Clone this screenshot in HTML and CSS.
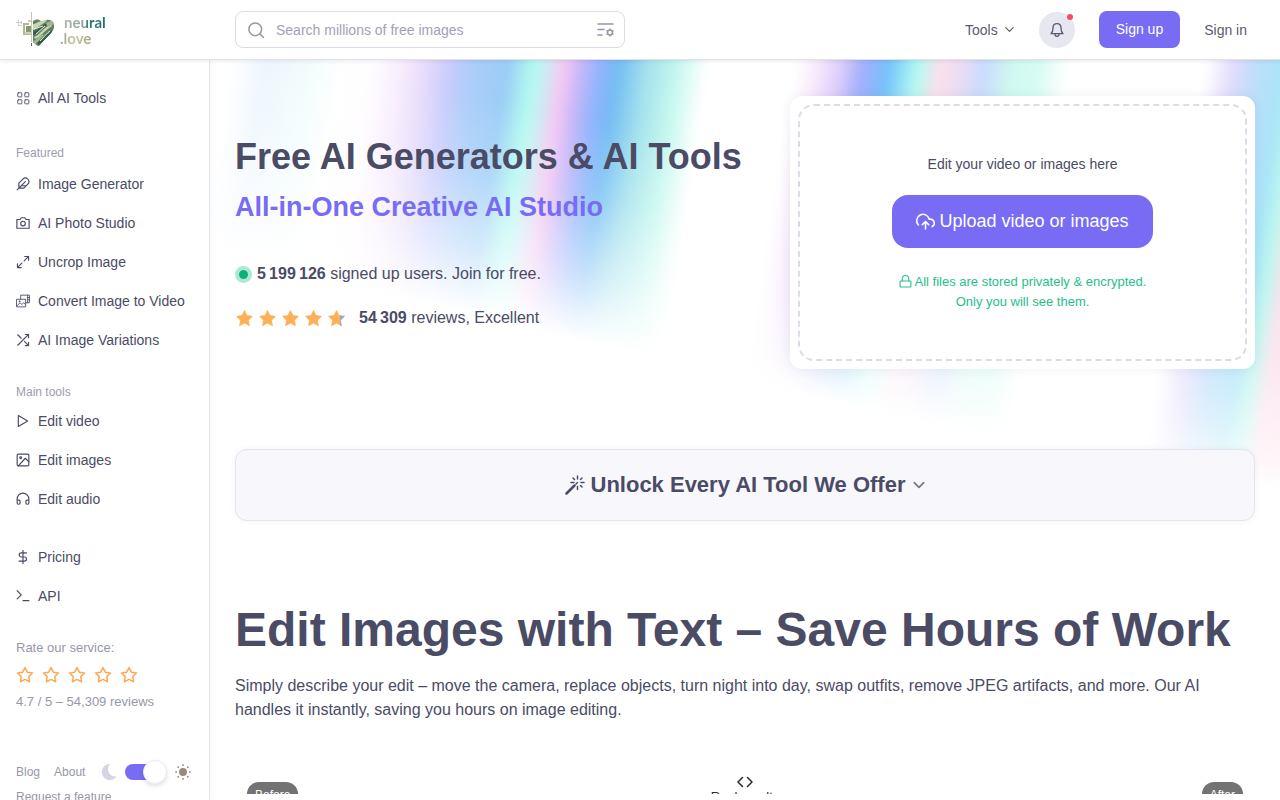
FILE: index.html
```
<!DOCTYPE html>
<html lang="en">
<head>
  <meta charset="UTF-8">
  <meta name="viewport" content="width=device-width, initial-scale=1">
  <title>Free AI Generators &amp; AI Tools | neural.love</title>
  <link rel="stylesheet" href="styles.css">
</head>
<body>
<!-- icons shared between several places -->
<svg class="sprite" aria-hidden="true">
  <symbol id="star" viewBox="0 0 24 24"><path d="M12 2l3.09 6.26L22 9.27l-5 4.87 1.18 6.88L12 17.77l-6.18 3.25L7 14.14 2 9.27l6.91-1.01z"/></symbol>
  <symbol id="chevron" viewBox="0 0 24 24"><path d="M4 8l8 8 8-8"/></symbol>
</svg>

<header class="header">
  <a class="logo" href="#" aria-label="neural.love">
    <svg class="logo-mark" viewBox="0 0 40 36" aria-hidden="true">
      <defs>
        <clipPath id="heart"><path d="M17 9c2-1 4-2 6-1l4 2c3-3 7-3 10 0 2 4 1 8-2 11L23 34c-2 0-4-2-6-4z"/></clipPath>
      </defs>
      <g clip-path="url(#heart)">
        <path fill="#5f8068" d="M16 5h24v30H16z"/>
        <path fill="#cbd5aa" d="M16 13l13-6 2 2-15 10zM18 25c6-2 9-9 17-13l1 2c-7 4-11 11-17 13z"/>
        <path fill="#335c4b" d="M17 20c5-2 8-6 12-8l2 1c-5 3-9 9-14 10zM21 31l15-13v3L23 33z"/>
        <path fill="#a3b78e" d="M17 29c4-1 6-5 8-7l3 1-9 10zM30 11l7-3 1 4-6 3z"/>
        <path stroke="#eef0dc" d="M18 17l9-3M24 29c4-4 7-8 10-10M20 22l9-8" fill="none"/>
      </g>
      <path fill="#b4b894" d="M7 11h6v2H9v8h7v2H7z"/>
      <path fill="#879875" d="M10 14h5v7h-5z"/>
      <path fill="#cdd0b9" d="M9 20h6v2H9zM12 8h3v2h-3z"/>
      <path stroke="#cfcfca" fill="none" d="M0 10.500h6M2.500 8v6M5.500 9v3M2 13.500h4"/>
      <path fill="#c9c7a8" d="M15 0h1v30h-1z"/>
      <path fill="#5b654f" d="M15 31h1v3h-1z"/>
    </svg>
    <span class="logo-text"><span class="logo-neural">neural</span><span class="logo-love">.love</span></span>
  </a>

  <form class="search" role="search">
    <svg class="icon search-icon" viewBox="0 0 24 24" aria-hidden="true"><circle cx="11" cy="11" r="8.500"/><path d="M22 22l-4.800-4.800"/></svg>
    <input class="search-input" type="search" placeholder="Search millions of free images" aria-label="Search millions of free images">
    <button class="search-filter" type="button" aria-label="Search settings">
      <svg class="icon" viewBox="0 0 18 16" aria-hidden="true"><path d="M2 2h15M2 7.500h6M2 13h4"/><circle cx="14" cy="10.500" r="2.500"/><path d="M14 7v.5M14 13.500v.5M11 8.800l.5.300M16.500 11.900l.5.300M11 12.200l.5-.3M16.500 9.100l.5-.3"/></svg>
    </button>
  </form>

  <nav class="header-nav">
    <button class="tools-button" type="button">Tools <svg class="icon" viewBox="0 0 24 24" aria-hidden="true"><use href="#chevron"/></svg></button>
    <button class="bell" type="button" aria-label="Notifications">
      <svg class="icon" viewBox="0 0 24 24" aria-hidden="true"><path d="M12 2.500c-4 0-6 3-6 6.500 0 5-1 6.500-3 8.500h18c-2-2-3-3.500-3-8.500 0-3.500-2-6.500-6-6.500zM9 17.500v1a3 3 0 0 0 6 0v-1"/></svg>
      <span class="bell-badge"></span>
    </button>
    <a class="sign-up" href="#">Sign up</a>
    <a class="sign-in" href="#">Sign in</a>
  </nav>
</header>

<div class="layout">
  <aside class="sidebar">
    <nav>
      <a class="side-link" href="#">
        <svg class="icon icon-thin" viewBox="0 0 24 24" aria-hidden="true"><rect x="3" y="3" width="7" height="7" rx="1"/><rect x="15" y="3" width="7" height="7" rx="1"/><rect x="3" y="15" width="7" height="7" rx="1"/><rect x="15" y="15" width="7" height="7" rx="1"/></svg>
        All AI Tools</a>

      <div class="side-title side-title-featured">Featured</div>
      <a class="side-link" href="#">
        <svg class="icon" viewBox="0 0 24 24" aria-hidden="true"><path d="M20.200 12.200a6 6 0 0 0-8.500-8.500L5 10.500V19h8.500zM16 8L2 22M17.500 15H9"/></svg>
        Image Generator</a>
      <a class="side-link" href="#">
        <svg class="icon" viewBox="0 0 24 24" aria-hidden="true"><path d="M1.500 6H7l2-3h6l2 3h5.500v15h-21z"/><circle cx="12" cy="13" r="4"/></svg>
        AI Photo Studio</a>
      <a class="side-link" href="#">
        <svg class="icon" viewBox="0 0 24 24" aria-hidden="true"><path d="M15 2.500h6.500V9M9 21.500H2.500V15M21.500 2.500L14 10M2.500 21.500L10 14"/></svg>
        Uncrop Image</a>
      <a class="side-link" href="#">
        <svg class="icon icon-thin" viewBox="0 0 24 24" aria-hidden="true"><path d="M1.500 9h15v13h-15zM8 9V2h15v13h-6M20 2v13M20 6h3M20 10h3M2 20l5-5 3 3 3-3 3 3"/><circle cx="6" cy="12.500" r=".8"/></svg>
        Convert Image to Video</a>
      <a class="side-link" href="#">
        <svg class="icon" viewBox="0 0 24 24" aria-hidden="true"><path d="M16 2.500h5.500V8M3 21L21.500 2.500M21.500 16v5.500H16M14.500 14.500l7 7M3 3l6 6"/></svg>
        AI Image Variations</a>

      <div class="side-title side-title-main">Main tools</div>
      <a class="side-link" href="#">
        <svg class="icon" viewBox="0 0 24 24" aria-hidden="true"><path d="M4 2.500l16 9.500-16 9.500z"/></svg>
        Edit video</a>
      <a class="side-link" href="#">
        <svg class="icon" viewBox="0 0 24 24" aria-hidden="true"><rect x="2" y="2" width="20" height="20" rx="2"/><circle cx="8" cy="8" r="1.500"/><path d="M22 15l-6-6L4 22"/></svg>
        Edit images</a>
      <a class="side-link" href="#">
        <svg class="icon" viewBox="0 0 24 24" aria-hidden="true"><path d="M2 18v-6a10 10 0 0 1 20 0v6M22 19a2 2 0 0 1-2 2h-1a2 2 0 0 1-2-2v-3a2 2 0 0 1 2-2h3zM2 19a2 2 0 0 0 2 2h1a2 2 0 0 0 2-2v-3a2 2 0 0 0-2-2H2z"/></svg>
        Edit audio</a>

      <div class="side-gap"></div>
      <a class="side-link" href="#">
        <svg class="icon" viewBox="0 0 24 24" aria-hidden="true"><path d="M12 0v24M18 5H9a3.500 3.500 0 0 0 0 7h5.500a3.500 3.500 0 0 1 0 7H5"/></svg>
        Pricing</a>
      <a class="side-link" href="#">
        <svg class="icon" viewBox="0 0 24 24" aria-hidden="true"><path d="M2 17l7-7-7-7M12 20h10"/></svg>
        API</a>
    </nav>

    <div class="rate">
      <div>Rate our service:</div>
      <div class="rate-stars">
        <button type="button" aria-label="1 star"><svg viewBox="0 0 24 24"><use href="#star"/></svg></button>
        <button type="button" aria-label="2 stars"><svg viewBox="0 0 24 24"><use href="#star"/></svg></button>
        <button type="button" aria-label="3 stars"><svg viewBox="0 0 24 24"><use href="#star"/></svg></button>
        <button type="button" aria-label="4 stars"><svg viewBox="0 0 24 24"><use href="#star"/></svg></button>
        <button type="button" aria-label="5 stars"><svg viewBox="0 0 24 24"><use href="#star"/></svg></button>
      </div>
      <div>4.7 / 5 – 54,309 reviews</div>
    </div>

    <div class="side-footer">
      <a href="#">Blog</a>
      <a href="#">About</a>
      <label class="theme">
        <svg class="moon" viewBox="0 0 16 16" aria-hidden="true"><path d="M9 0a8 8 0 1 0 6.500 12.500A7.500 7.500 0 0 1 9 0z"/></svg>
        <input class="theme-switch" type="checkbox" role="switch" aria-label="Light theme" checked>
        <svg class="sun" viewBox="0 0 16 16" aria-hidden="true"><circle cx="8" cy="8" r="3.200"/><path d="M8 .3v1.700M8 14v1.700M.3 8H2M14 8h1.700M2.600 2.600l1.200 1.200M12.200 12.200l1.200 1.200M2.600 13.400l1.200-1.200M12.200 3.800l1.200-1.200"/></svg>
      </label>
    </div>
    <a class="side-feature" href="#">Request a feature</a>
  </aside>

  <main class="main">
    <!-- soft rainbow beams behind the hero -->
    <svg class="beams" viewBox="0 0 1070 400" preserveAspectRatio="none" aria-hidden="true">
      <defs>
        <linearGradient id="rainbow" gradientUnits="userSpaceOnUse" x1="0" y1="0" x2="1082" y2="168">
          <stop offset="2%" stop-color="#fff"/>
          <stop offset="5%" stop-color="#edf5fe"/>
          <stop offset="9%" stop-color="#f2fcfc"/>
          <stop offset="12%" stop-color="#fff"/>
          <stop offset="15%" stop-color="#fefcff"/>
          <stop offset="17.500%" stop-color="#f7ecfc"/>
          <stop offset="20%" stop-color="#e2d8fb"/>
          <stop offset="22%" stop-color="#c5cbfc"/>
          <stop offset="24%" stop-color="#abcdf9"/>
          <stop offset="27%" stop-color="#9bcdf6"/>
          <stop offset="29.200%" stop-color="#b1fbf0"/>
          <stop offset="30.500%" stop-color="#cdebf3"/>
          <stop offset="32%" stop-color="#f7c8f2"/>
          <stop offset="33.500%" stop-color="#c9b8f8"/>
          <stop offset="35.300%" stop-color="#91b4fc"/>
          <stop offset="37%" stop-color="#74bdf3"/>
          <stop offset="39.500%" stop-color="#a3e1ec"/>
          <stop offset="42.500%" stop-color="#c9f9ef"/>
          <stop offset="45%" stop-color="#fff"/>
          <stop offset="53%" stop-color="#fff"/>
          <stop offset="55%" stop-color="#f6e8fb"/>
          <stop offset="57%" stop-color="#dccefb"/>
          <stop offset="59%" stop-color="#a4affb"/>
          <stop offset="61.300%" stop-color="#74c2fb"/>
          <stop offset="64%" stop-color="#b4fbf1"/>
          <stop offset="66%" stop-color="#fce0ec"/>
          <stop offset="68%" stop-color="#eadcf5"/>
          <stop offset="70%" stop-color="#c8dcfc"/>
          <stop offset="72.500%" stop-color="#d1f8f0"/>
          <stop offset="75%" stop-color="#d6fcf2"/>
          <stop offset="77.500%" stop-color="#fff"/>
          <stop offset="90%" stop-color="#fff"/>
          <stop offset="92.500%" stop-color="#e1dcfd"/>
          <stop offset="94.500%" stop-color="#bedefa"/>
          <stop offset="97%" stop-color="#a9e4f8"/>
          <stop offset="98.500%" stop-color="#bdf8ee"/>
          <stop offset="100%" stop-color="#fce0ec"/>
        </linearGradient>
        <linearGradient id="fade" gradientUnits="userSpaceOnUse" x1="0" y1="-30" x2="-50" y2="180">
          <stop offset="0%" stop-color="#fff"/>
          <stop offset="35%" stop-color="#ccc"/>
          <stop offset="70%" stop-color="#6c6c6c"/>
          <stop offset="100%" stop-color="#000"/>
        </linearGradient>
        <mask id="beam-mask" maskUnits="userSpaceOnUse" x="0" y="-20" width="1080" height="440"><path fill="url(#fade)" d="M0-20h1080v440H0z"/></mask>
      </defs>
      <path fill="url(#rainbow)" mask="url(#beam-mask)" d="M0-20h1080v440H0z"/>
    </svg>

    <section class="hero">
      <div class="hero-text">
        <h1>Free AI Generators &amp; AI Tools</h1>
        <p class="hero-sub">All-in-One Creative AI Studio</p>
        <p class="hero-users"><span class="online"></span><span><strong>5&thinsp;199&thinsp;126</strong> signed up users. Join for free.</span></p>
        <div class="hero-reviews">
          <span class="stars" role="img" aria-label="4.7 out of 5">
            <svg viewBox="0 0 24 24"><use href="#star"/></svg>
            <svg viewBox="0 0 24 24"><use href="#star"/></svg>
            <svg viewBox="0 0 24 24"><use href="#star"/></svg>
            <svg viewBox="0 0 24 24"><use href="#star"/></svg>
            <svg viewBox="0 0 24 24">
              <defs><linearGradient id="part"><stop offset="70%" stop-color="#ffb057"/><stop offset="70%" stop-color="#a3a3b3"/></linearGradient></defs>
              <path fill="url(#part)" stroke="url(#part)" d="M12 2l3.090 6.260L22 9.270l-5 4.870 1.180 6.880L12 17.770l-6.180 3.250L7 14.140 2 9.270l6.910-1.010z"/>
            </svg>
          </span>
          <span><strong>54&thinsp;309</strong> reviews, Excellent</span>
        </div>
      </div>

      <div class="upload">
        <div class="upload-zone">
          <p class="upload-title">Edit your video or images here</p>
          <button class="upload-button" type="button">
            <svg class="icon" viewBox="0 0 24 24" aria-hidden="true"><path d="M16 16l-4-4-4 4M12 12v9.500M20.400 18.400A5 5 0 0 0 18 9h-1.300A8 8 0 1 0 3 16.300"/></svg>
            Upload video or images
          </button>
          <p class="upload-note">
            <svg class="icon" viewBox="0 0 24 24" aria-hidden="true"><rect x="2" y="11" width="20" height="11" rx="1"/><path d="M6 11V7a6 6 0 0 1 12 0v4"/></svg>
            All files are stored privately &amp; encrypted.<br>Only you will see them.
          </p>
        </div>
      </div>
    </section>

    <button class="unlock" type="button">
      <svg class="icon wand" viewBox="0 0 20 20" aria-hidden="true"><path class="wand-stick" d="M1.500 18.500L9.500 10.500"/><path d="M11 9l1.500-1.500M12.500 1v3M12.500 11.500v3M6 7.500h3M16 7.500h3M8 3l1.500 1.500M17 3l-1.500 1.500M17 12l-1.500-1.500"/></svg>
      Unlock Every AI Tool We Offer
      <svg class="icon unlock-chevron" viewBox="0 0 24 24" aria-hidden="true"><use href="#chevron"/></svg>
    </button>

    <section class="edit">
      <h2>Edit Images with Text – Save Hours of Work</h2>
      <p>Simply describe your edit – move the camera, replace objects, turn night into day, swap outfits, remove JPEG artifacts, and more. Our AI handles it instantly, saving you hours on image editing.</p>
    </section>

    <div class="compare">
      <span class="compare-tag">Before</span>
      <span class="compare-handle">
        <svg class="icon" viewBox="0 0 16 12" aria-hidden="true"><path d="M5.500 1.500L1 6l4.500 4.500M10.500 1.500L15 6l-4.500 4.500"/></svg>
        Real results
      </span>
      <span class="compare-tag compare-after">After</span>
    </div>
  </main>
</div>
</body>
</html>
```
FILE: styles.css
```
* {
  box-sizing: border-box;
}

body {
  margin: 0;
  height: 100vh;
  display: flex;
  flex-direction: column;
  overflow: hidden;
  font-family: "Liberation Sans", Arial, sans-serif;
  font-size: 14px;
  color: #4a4b65;
  background: #fff;
}

h1, h2, p {
  margin: 0;
}

a {
  color: inherit;
  text-decoration: none;
}

button {
  padding: 0;
  border: 0;
  background: none;
  color: inherit;
  font: inherit;
  cursor: pointer;
}

.sprite {
  display: none;
}

.icon {
  flex: none;
  fill: none;
  stroke: currentColor;
  stroke-width: 2;
  stroke-linecap: round;
  stroke-linejoin: round;
}

/* header */
.header {
  position: relative;
  z-index: 2;
  flex: none;
  display: flex;
  align-items: center;
  height: 60px;
  padding: 0 33px 0 16px;
  border-bottom: 1px solid #e2e2ea;
  background: #fff;
  box-shadow: 0 1px 4px rgba(40, 40, 70, 0.1);
}

.logo {
  display: flex;
  align-items: center;
  gap: 4px;
  width: 219px;
}

.logo-mark {
  width: 40px;
  height: 36px;
}

.logo-text {
  display: flex;
  flex-direction: column;
  font-family: Lato, sans-serif;
  font-size: 15px;
  font-weight: bold;
  line-height: 16px;
}

.logo-neural,
.logo-love {
  align-self: flex-start;
  color: transparent;
  -webkit-background-clip: text;
  background-clip: text;
}

.logo-neural {
  padding-left: 4px;
  background-image: linear-gradient(90deg, #b6b5ac, #8da69b 50%, #2f7673 62%, #27706f);
}

.logo-love {
  background-image: linear-gradient(90deg, #a0a58c, #c9c8a0 50%, #a1a083);
}

.search {
  display: flex;
  align-items: center;
  width: 390px;
  height: 37px;
  padding: 0 10px 0 11px;
  border: 1px solid #dcdbe6;
  border-radius: 8px;
  color: #9797a8;
}

.search-icon {
  width: 18px;
  height: 18px;
}

.search-input {
  flex: 1;
  min-width: 0;
  padding: 0 11px;
  border: 0;
  outline: 0;
  background: none;
  font: inherit;
}

.search-input::placeholder {
  color: #a3a1b5;
}

.search-filter .icon {
  display: block;
  width: 18px;
  height: 16px;
  stroke-width: 1.5;
}

.header-nav {
  display: flex;
  align-items: center;
  gap: 24px;
  margin-left: auto;
  color: #5b5b6e;
}

.tools-button {
  display: flex;
  align-items: center;
  gap: 6px;
}

.tools-button .icon {
  width: 11px;
  height: 11px;
  stroke-width: 2.5;
}

.bell {
  position: relative;
  display: grid;
  place-items: center;
  width: 36px;
  height: 36px;
  border-radius: 50%;
  background: #e7e7f1;
}

.bell .icon {
  width: 16px;
  height: 16px;
}

.bell-badge {
  position: absolute;
  top: 2px;
  right: 2px;
  width: 6px;
  height: 6px;
  border-radius: 50%;
  background: #f9486e;
}

.sign-up {
  padding: 0 17px;
  border-radius: 8px;
  background: #776cf3;
  color: #fff;
  line-height: 37px;
}

/* sidebar */
.layout {
  flex: 1;
  display: flex;
  min-height: 0;
}

.sidebar {
  flex: none;
  width: 210px;
  padding: 18px 16px 0;
  overflow: hidden;
  border-right: 1px solid #e6e6ee;
  box-shadow: 0 0 5px rgba(40, 40, 70, 0.06);
}

.side-link {
  display: flex;
  align-items: center;
  gap: 8px;
  height: 39px;
  white-space: nowrap;
}

.side-link .icon {
  width: 14px;
  height: 14px;
}

.side-link .icon-thin {
  stroke-width: 1.5;
}

.side-title {
  color: #9c9cac;
  font-size: 12px;
  line-height: 18px;
}

.side-title-featured {
  margin: 27px 0 2px;
}

.side-title-main {
  margin-top: 25px;
  line-height: 17px;
}

.side-gap {
  height: 19px;
}

.rate {
  margin-top: 23px;
  color: #9797a8;
  font-size: 13px;
  line-height: 19px;
}

.rate-stars {
  display: flex;
  gap: 8px;
  margin: 9px 0 8px;
}

.rate-stars svg {
  display: block;
  width: 18px;
  height: 18px;
  fill: none;
  stroke: #ffa955;
  stroke-width: 2;
  stroke-linejoin: round;
}

.side-footer {
  display: flex;
  align-items: center;
  gap: 14px;
  height: 24px;
  margin-top: 49px;
  color: #9797a8;
  font-size: 12px;
}

.side-feature {
  display: block;
  margin-top: 4px;
  color: #9797a8;
  font-size: 12px;
  line-height: 18px;
}

.theme {
  display: flex;
  align-items: center;
  gap: 8px;
  margin-left: 2px;
}

.moon,
.sun {
  width: 16px;
  height: 16px;
}

.moon {
  fill: #d5d4df;
}

.sun {
  fill: #988b7d;
  stroke: #988b7d;
  stroke-width: 1.5;
}

.theme-switch {
  appearance: none;
  display: flex;
  align-items: center;
  justify-content: flex-end;
  width: 42px;
  height: 16px;
  margin: 0;
  border-radius: 8px;
  background: linear-gradient(90deg, #776cf3 75%, transparent 75%);
}

.theme-switch::before {
  content: "";
  width: 22px;
  height: 22px;
  border: 1px solid #ececf2;
  border-radius: 50%;
  background: #fff;
  box-shadow: 0 2px 4px rgba(40, 40, 70, 0.15);
}

/* main column */
.main {
  position: relative;
  flex: 1;
  display: flex;
  flex-direction: column;
  min-width: 0;
  padding: 36px 25px 6px;
}

.beams {
  position: absolute;
  top: 0;
  left: 0;
  z-index: -1;
  width: 100%;
  height: 400px;
  overflow: visible;
  filter: blur(4px);
}

.hero {
  display: grid;
  grid-template-columns: minmax(0, 1fr) 465px;
  gap: 25px;
}

.hero-text {
  padding-top: 39px;
  font-size: 16px;
  line-height: 24px;
}

.hero-text h1 {
  font-size: 36px;
  line-height: 44px;
  white-space: nowrap;
}

.hero-sub {
  margin-top: 11px;
  color: #776cf3;
  font-size: 27px;
  font-weight: bold;
  line-height: 34px;
}

.hero-users {
  display: flex;
  align-items: center;
  gap: 5px;
  margin-top: 38px;
}

.online {
  width: 17px;
  height: 17px;
  border: 4px solid #ade9d2;
  border-radius: 50%;
  background: #0ab27a;
}

.hero-reviews {
  display: flex;
  align-items: center;
  gap: 13px;
  margin-top: 20px;
}

.stars {
  display: flex;
  gap: 4px;
}

.stars svg {
  width: 19px;
  height: 19px;
  fill: #ffb057;
  stroke: #ffb057;
  stroke-width: 1;
  stroke-linejoin: round;
}

.upload {
  align-self: start;
  padding: 8px;
  border-radius: 12px;
  background: #fff;
  box-shadow: 0 0 12px rgba(60, 60, 100, 0.08);
}

.upload-zone {
  display: flex;
  flex-direction: column;
  align-items: center;
  padding: 48px 16px 47px;
  border: 2px dashed #dcdbe6;
  border-radius: 16px;
  text-align: center;
}

.upload-title {
  line-height: 21px;
}

.upload-button {
  display: flex;
  align-items: center;
  gap: 4px;
  height: 53px;
  margin: 20px 0 24px;
  padding: 0 24px;
  border-radius: 16px;
  background: #776cf3;
  color: #fff;
  font-size: 18px;
}

.upload-button .icon {
  width: 19px;
  height: 19px;
}

.upload-note {
  color: #25c08b;
  font-size: 13px;
  line-height: 20px;
}

.upload-note .icon {
  width: 13px;
  height: 13px;
  vertical-align: -2px;
}

.unlock {
  display: flex;
  flex: none;
  align-items: center;
  justify-content: center;
  gap: 6px;
  height: 72px;
  margin-top: 80px;
  border: 1px solid #e5e4ee;
  border-radius: 12px;
  background: #f7f7fc;
  box-shadow: 0 0 6px rgba(60, 60, 100, 0.06);
  font-size: 22px;
  font-weight: bold;
}

.wand {
  width: 20px;
  height: 20px;
  stroke-width: 1.5;
}

.wand-stick {
  stroke-width: 2.5;
}

.unlock-chevron {
  width: 14px;
  height: 14px;
  color: #77778a;
  stroke-width: 3;
}

.edit {
  margin-top: 80px;
  font-size: 16px;
  line-height: 24px;
}

.edit h2 {
  margin-bottom: 15px;
  font-size: 48px;
  line-height: 58px;
}

.compare {
  flex: 1;
  display: grid;
  grid-template-columns: 1fr auto 1fr;
  align-items: start;
  min-height: 0;
  margin-top: 52px;
  padding: 2px 12px 0;
  overflow: hidden;
}

.compare-tag {
  justify-self: start;
  margin-top: 6px;
  padding: 0 8px;
  border-radius: 12px;
  background: #737373;
  color: #fff;
  font-size: 12px;
  line-height: 26px;
}

.compare-after {
  justify-self: end;
}

.compare-handle {
  display: flex;
  flex-direction: column;
  align-items: center;
  gap: 1px;
  color: #2b2b33;
  font-size: 13px;
  line-height: 15px;
}

.compare-handle .icon {
  width: 16px;
  height: 12px;
  stroke-width: 1.5;
}
```
